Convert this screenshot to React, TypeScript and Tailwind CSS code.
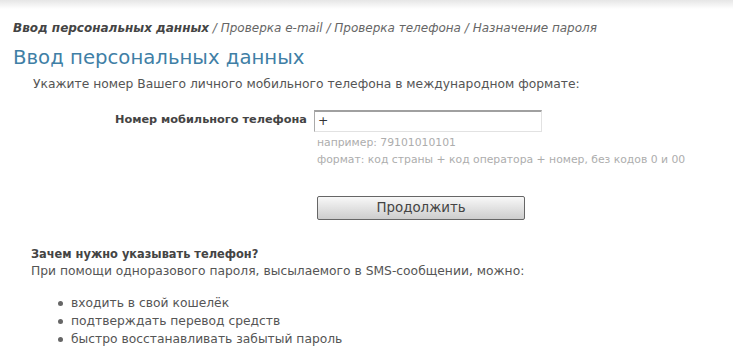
import React from "react";

export default function App() {
  const font = { fontFamily: '"DejaVu Sans", Verdana, sans-serif' };
  return (
    <div className="w-[733px] h-[361px] bg-white overflow-hidden text-[#555]" style={font}>
      <div className="h-[9px] bg-gradient-to-b from-[#e6e6e6] to-white" />
      <div className="pl-[13px] pt-[11px] text-[12px] leading-[16px] italic text-[#666]">
        <span className="font-bold text-[#444]">Ввод персональных данных</span> / Проверка e-mail / Проверка телефона / Назначение пароля
      </div>
      <h1 className="pl-[13px] mt-[10px] text-[19.7px] leading-[24px] text-[#3f7fa6]">Ввод персональных данных</h1>
      <p className="pl-[33px] mt-[6px] text-[12.3px] leading-[16px] text-[#555]">
        Укажите номер Вашего личного мобильного телефона в международном формате:
      </p>
      <div className="flex mt-[18px]">
        <div className="w-[307px] pt-[2px] text-right text-[11.3px] leading-[16px] font-bold text-[#444]">
          Номер мобильного телефона
        </div>
        <div className="ml-[7px] flex flex-col">
          <div className="w-[228px] h-[22px] border-t-2 border-l border-t-[#a0a0a0] border-l-[#aaa] border-r border-b border-r-[#e2e2e2] border-b-[#e2e2e2] pl-[3px] text-[12.3px] leading-[18px] text-[#333]">
            +
          </div>
          <div className="pl-[3px] mt-[4px] text-[10.8px] leading-[14px] text-[#adadad]">например: 79101010101</div>
          <div className="pl-[3px] mt-[3px] text-[10.8px] leading-[14px] text-[#adadad]">
            формат: код страны + код оператора + номер, без кодов 0 и 00
          </div>
          <div className="pl-[3px] mt-[29px]">
            <div className="w-[208px] h-[24px] border border-[#666] rounded-[2px] bg-gradient-to-b from-[#f8f8f8] to-[#cdcdcd] flex items-center justify-center text-[13.4px] text-[#444]">
              Продолжить
            </div>
          </div>
        </div>
      </div>
      <div className="pl-[31px] mt-[26px] text-[12.3px] leading-[17px]">
        <div className="font-bold text-[11.4px] text-[#444]">Зачем нужно указывать телефон?</div>
        <div className="text-[#555]">При помощи одноразового пароля, высылаемого в SMS-сообщении, можно:</div>
        <ul className="mt-[14px] pl-[27px] leading-[18px]">
          {["входить в свой кошелёк", "подтверждать перевод средств", "быстро восстанавливать забытый пароль"].map((t) => (
            <li key={t} className="flex items-center">
              <span className="w-[5px] h-[5px] rounded-full bg-[#666] mr-[8px]" />
              {t}
            </li>
          ))}
        </ul>
      </div>
    </div>
  );
}
